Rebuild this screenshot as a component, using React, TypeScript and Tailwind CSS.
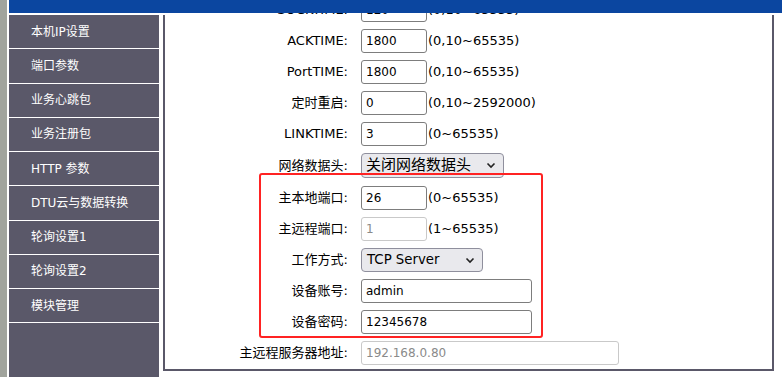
import React from "react";

const SIDE = [
  "本机IP设置",
  "端口参数",
  "业务心跳包",
  "业务注册包",
  "HTTP 参数",
  "DTU云与数据转换",
  "轮询设置1",
  "轮询设置2",
  "模块管理",
];

const FONT = { fontFamily: '"DejaVu Sans", "Noto Sans CJK SC", sans-serif' };

function Chevron() {
  return (
    <svg width="10" height="7" viewBox="0 0 10 7" className="shrink-0">
      <path d="M1.5 1.5 L5 5 L8.5 1.5" fill="none" stroke="#222" strokeWidth="1.6" />
    </svg>
  );
}

function Input({ value, w = 66, disabled = false }: { value: string; w?: number; disabled?: boolean }) {
  return (
    <div
      className={
        "h-[24px] rounded-[3px] border flex items-center pl-[4px] text-[12px] bg-white shrink-0 " +
        (disabled ? "border-[#c9c9c9] text-[#8a8a8a]" : "border-[#7d7d7d] text-black")
      }
      style={{ width: w }}
    >
      {value}
    </div>
  );
}

type Row = {
  label: string;
  h: number;
  field: React.ReactNode;
  hint?: string;
};

export default function App() {
  const rows: Row[] = [
    { label: "SOCKTIME:", h: 31, field: <Input value="120" />, hint: "(0,10~65535)" },
    { label: "ACKTIME:", h: 31, field: <Input value="1800" />, hint: "(0,10~65535)" },
    { label: "PortTIME:", h: 31, field: <Input value="1800" />, hint: "(0,10~65535)" },
    { label: "定时重启:", h: 31, field: <Input value="0" />, hint: "(0,10~2592000)" },
    { label: "LINKTIME:", h: 31, field: <Input value="3" />, hint: "(0~65535)" },
    {
      label: "网络数据头:",
      h: 32,
      field: (
        <div className="w-[143px] h-[25px] rounded-[4px] border border-[#8f8f9d] bg-[#e9e9ed] flex items-center justify-between pl-[4px] pr-[7px]">
          <span className="text-[15px] leading-none">关闭网络数据头</span>
          <Chevron />
        </div>
      ),
    },
    { label: "主本地端口:", h: 32, field: <Input value="26" />, hint: "(0~65535)" },
    { label: "主远程端口:", h: 31, field: <Input value="1" disabled />, hint: "(1~65535)" },
    {
      label: "工作方式:",
      h: 31,
      field: (
        <div className="w-[122px] h-[24px] rounded-[4px] border border-[#8f8f9d] bg-[#e9e9ed] flex items-center justify-between pl-[5px] pr-[7px]">
          <span className="text-[13.3px] leading-none">TCP Server</span>
          <Chevron />
        </div>
      ),
    },
    { label: "设备账号:", h: 31, field: <Input value="admin" w={171} /> },
    { label: "设备密码:", h: 31, field: <Input value="12345678" w={171} /> },
    { label: "主远程服务器地址:", h: 31, field: <Input value="192.168.0.80" w={258} disabled /> },
  ];

  return (
    <div className="relative w-[782px] h-[377px] flex bg-white overflow-hidden" style={FONT}>
      <div className="w-[7px] bg-[#a1a49d] shrink-0" />
      <div className="w-[2px] shrink-0" />
      <div className="flex-1 flex flex-col min-w-0">
        <div className="h-[13px] bg-[#0b46a0] shrink-0" />
        <div className="flex flex-1 min-h-0">
          <nav className="w-[150px] mt-[2px] bg-[#5a5869] shrink-0 flex flex-col">
            {SIDE.map((s) => (
              <div
                key={s}
                className="h-[34.25px] border-b border-white flex items-center pl-[22px] text-white text-[12px] shrink-0"
              >
                {s}
              </div>
            ))}
          </nav>
          <div className="w-[4px] shrink-0" />
          <div className="w-[611px] h-[358px] flex flex-col shrink-0">
            <div className="flex flex-1 min-h-0">
              <div className="w-[2px] mt-[2px] bg-[#5a5869] shrink-0" />
              <div className="flex-1 overflow-hidden bg-white">
                <div className="mt-[-18.5px] flex flex-col">
                  {rows.map((r) => (
                    <div key={r.label} className="flex items-center shrink-0" style={{ height: r.h }}>
                      <div className="w-[183px] text-right text-[13px] text-black whitespace-nowrap">{r.label}</div>
                      <div className="ml-[13px] flex items-center text-[13px] text-black">
                        {r.field}
                        {r.hint && <span className="ml-[1px] whitespace-nowrap">{r.hint}</span>}
                      </div>
                    </div>
                  ))}
                </div>
              </div>
              <div className="w-[2px] mt-[2px] bg-[#5a5869] shrink-0" />
            </div>
            <div className="h-[2px] bg-[#5a5869] shrink-0" />
          </div>
        </div>
      </div>
      <div className="absolute left-[259px] top-[173px] w-[284px] h-[165px] border-[2.5px] border-[#ff2323] rounded-[3px] pointer-events-none" />
    </div>
  );
}
